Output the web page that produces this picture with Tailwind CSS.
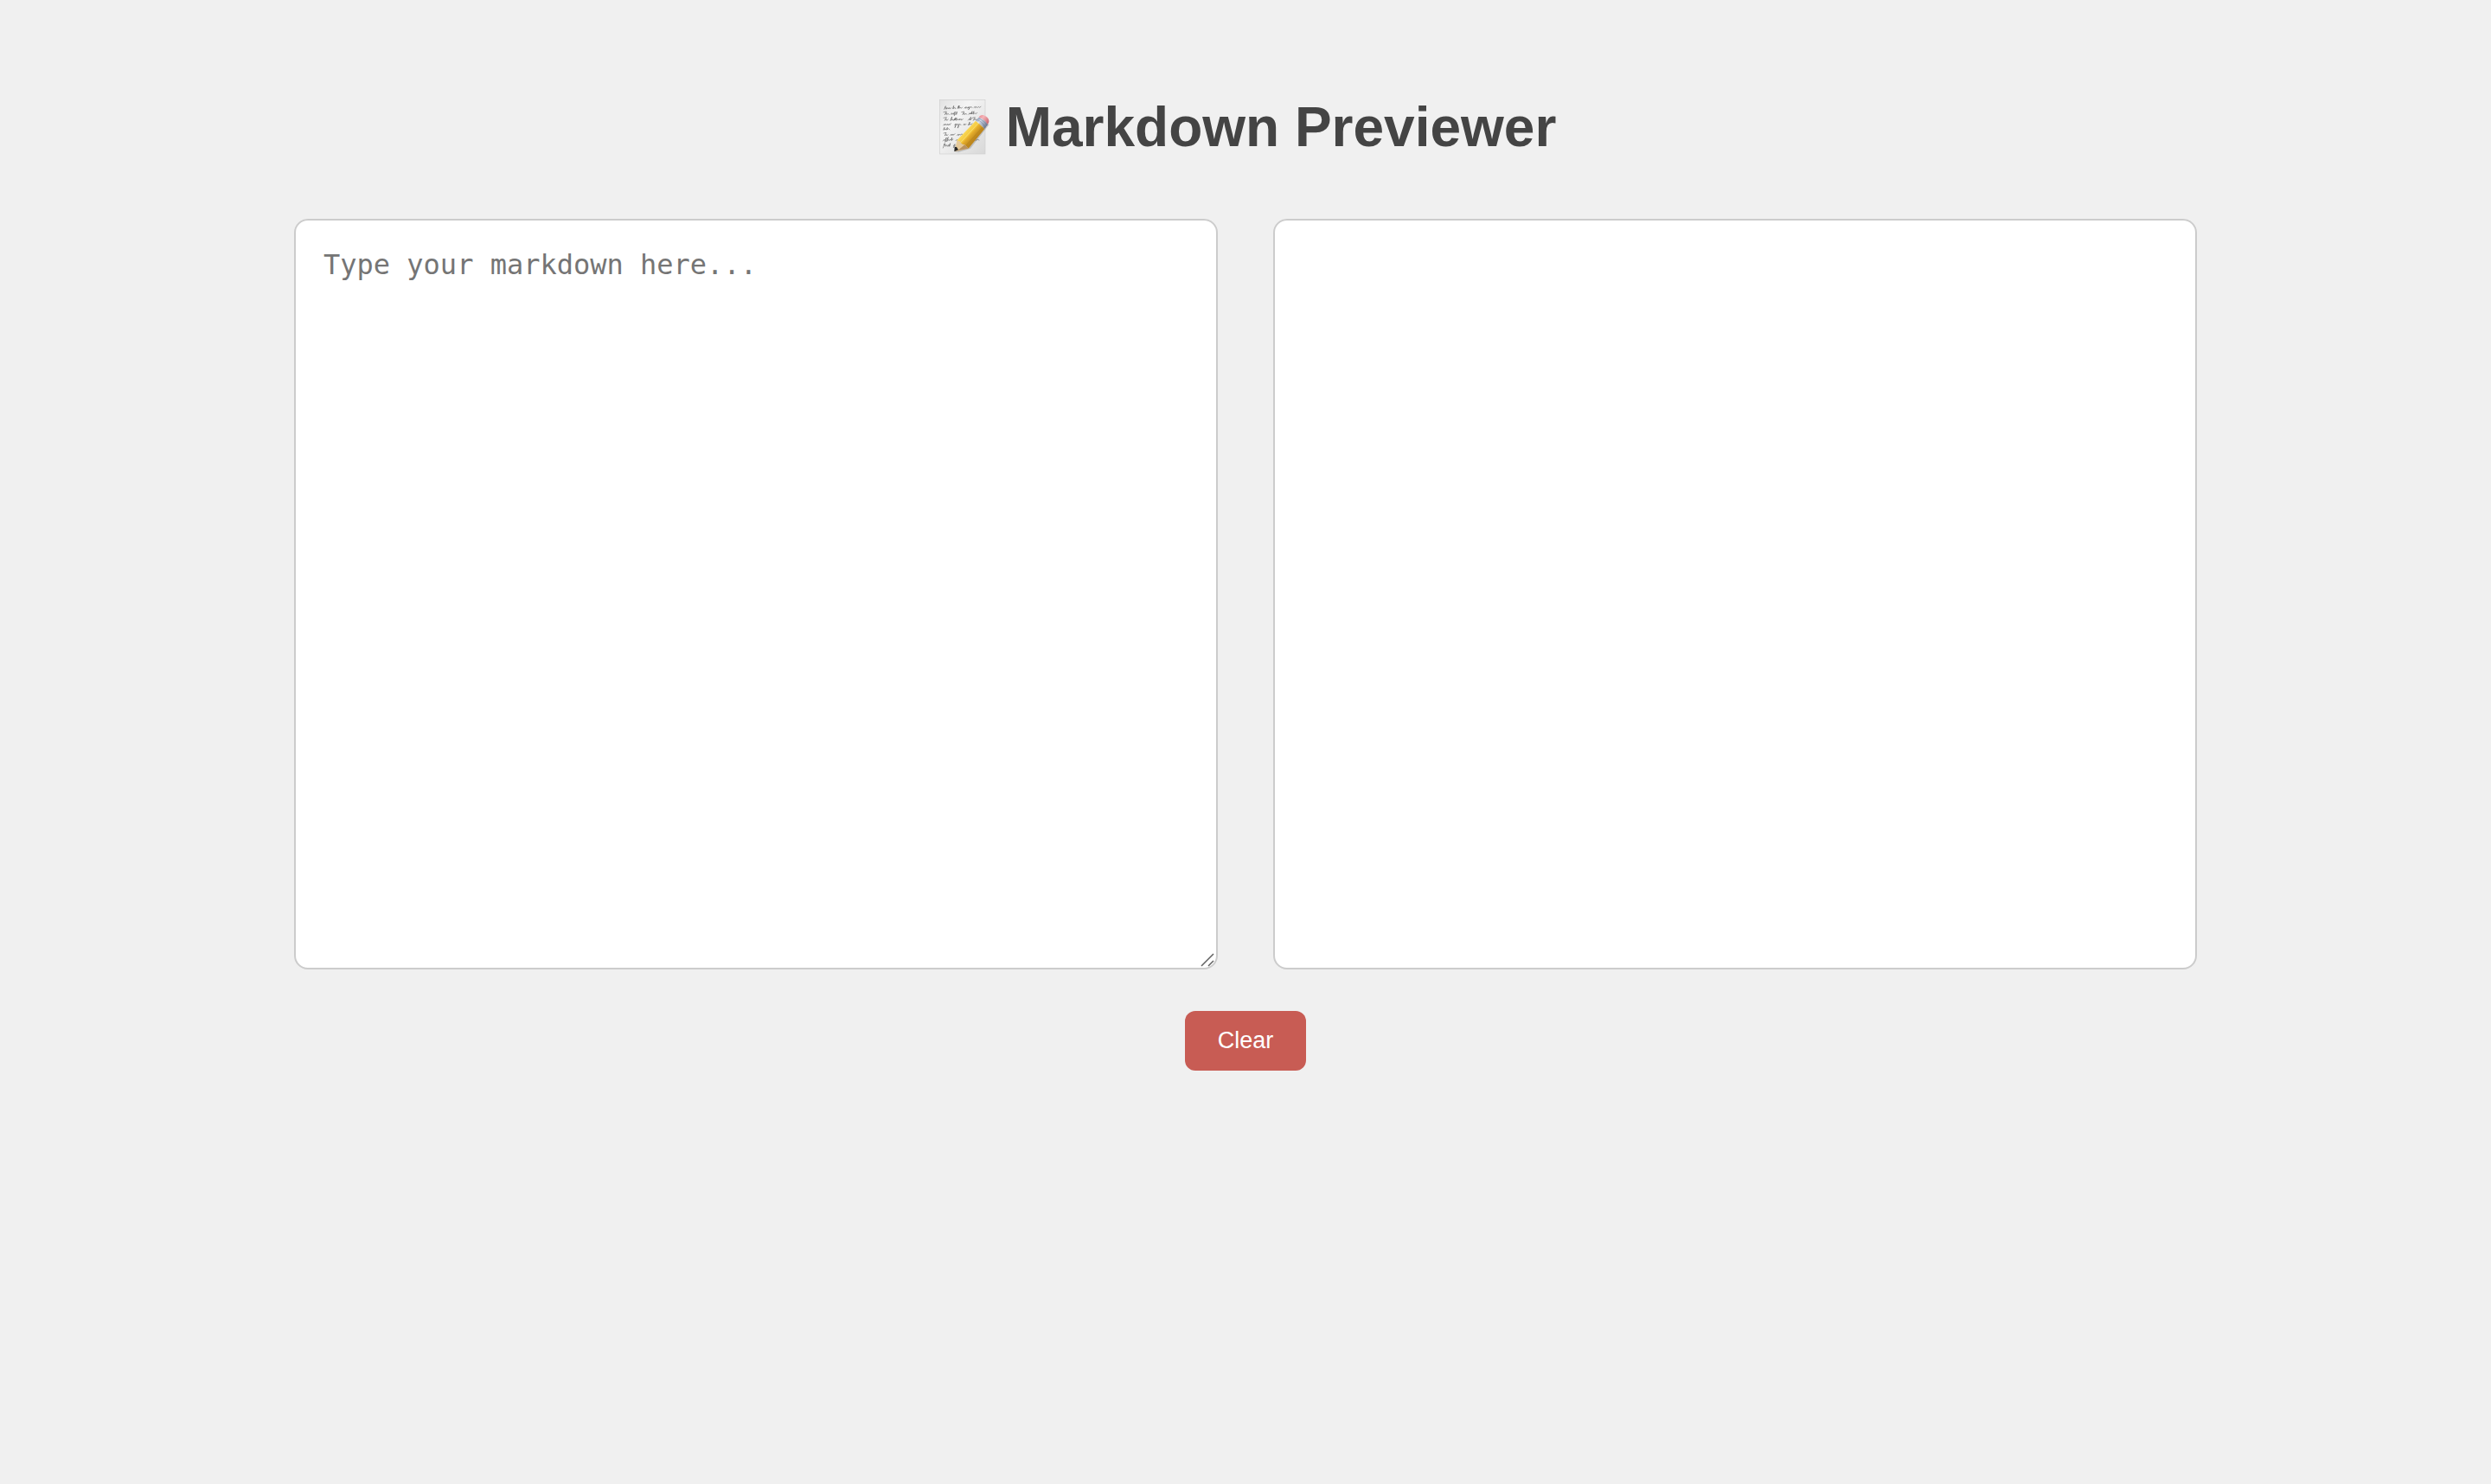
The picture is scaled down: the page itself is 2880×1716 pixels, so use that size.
<!DOCTYPE html>
<html lang="en">
<head>
<meta charset="utf-8">
<meta name="viewport" content="width=device-width, initial-scale=1">
<title>Markdown Previewer</title>
<script src="https://cdn.jsdelivr.net/npm/@tailwindcss/browser@4"></script>
</head>
<body class="min-h-screen bg-[#f0f0f0] font-['Liberation_Sans',Arial,sans-serif] text-[#444]">
<main class="mx-auto flex w-full max-w-[2264px] flex-col items-center px-8 pt-[110px] pb-16">
  <h1 class="flex items-center gap-[18px] text-[64px] leading-[74px] font-bold">
    <svg class="h-[66px] w-16 shrink-0" viewBox="33 38 192 198" aria-hidden="true">
      <defs>
        <linearGradient id="paper" x1="0" y1="0" x2="1" y2="1">
          <stop offset="0" stop-color="#e2e2e2"/><stop offset=".35" stop-color="#f4f4f4"/><stop offset="1" stop-color="#d8d8d8"/>
        </linearGradient>
        <linearGradient id="wood" gradientUnits="userSpaceOnUse" x1="140" y1="145" x2="172" y2="174">
          <stop offset="0" stop-color="#fbdc5c"/><stop offset=".45" stop-color="#f3c63c"/><stop offset=".55" stop-color="#e6ae2c"/><stop offset="1" stop-color="#bd861c"/>
        </linearGradient>
        <linearGradient id="metal" gradientUnits="userSpaceOnUse" x1="175" y1="108" x2="208" y2="136">
          <stop offset="0" stop-color="#8b9cb8"/><stop offset=".35" stop-color="#d3dcea"/><stop offset="1" stop-color="#737f95"/>
        </linearGradient>
        <linearGradient id="rubber" gradientUnits="userSpaceOnUse" x1="185" y1="98" x2="220" y2="124">
          <stop offset="0" stop-color="#e88b93"/><stop offset=".35" stop-color="#f6b4b8"/><stop offset="1" stop-color="#c8606c"/>
        </linearGradient>
      </defs>
      <rect x="49" y="42" width="158" height="188" fill="url(#paper)" stroke="#cecece" stroke-width="2"/>
      <g fill="none" stroke="#484848" stroke-width="1.5" stroke-linecap="round" stroke-linejoin="round">
        <path d="M65 75l5-11-2 8 6-2-2 5 4-5 3 4 3-5 2 5 5-4M94 73l4-10-1 10 5-4 2 4M111 72l4-9-1 9 3-10 0 10 4-4 3 4 4-4M135 71l4-4 0 5 4-5 2 5 4-5-1 4 5-5-2 9-3 1 6-6 5-4 3 4M168 69l4-3 1 4 4-4 3 4 4-4 3 3 5-3"/>
        <path d="M63 85l10-2-6 11 6-6 1 6 4-4 4 3M88 93l3-5 2 5 4-5 1 5 5-10-3 14 4-6 2 2 3-10-1 9M125 85l9-2-5 11 5-6 2 6 4-5 3 4M150 93l3-5 2 4 4-5-1 5 4-10-1 10 4-4 3-6-2 10 5-4 4 3 4-4"/>
        <path d="M63 105l10-2-6 11 5-5 2 5 5-4M86 114l6-13-3 13 4-5 3 5 5-6-2 6 6-10-2 9 5-8-1 9 4-5 3 4 4-5 1 5 4-5 2 5 5-4M148 113l4-5 2 5 3-11-1 10 4-4M162 105l10-2-6 11 6-6 3 5 4-4"/>
        <path d="M62 131l4-5 1 5 4-5 2 4 4-4 1 5 4-5 2 4 4-6M101 129l4-4-3 14 4-9 3-5 2 5 4-4-1 12-3 2 5-10 4-4 3 4M132 130l3-5 2 5 4-4M148 130l6-11-3 11 4-5 3 4 4-5"/>
        <path d="M62 146l4-8-1 9 4-4 3 4 4-9-1 8 5-4 4 4"/>
        <path d="M63 158l9-2-5 11 5-5 2 5 4-4M86 166l4-5 2 5 4-5 1 4 5-5M110 166l4-5 1 5 4-5 3 4 4-5 3 4"/>
        <path d="M61 185l4-5 2 4 6-11-5 16 7-9 4-8-5 15 6-7 2 4 4-5 3 4 3-10-2 10 6-4M105 184l4-4 3 4"/>
        <path d="M61 209l6-16-3 7 6-2-1 6 5-5 2 5 5-6 0 6 5-11-2 10M97 202l5-6-5 12 7-9M174 183l7-3 5 2"/>
      </g>
      <path d="M103 223l15-34 76-73 27 12-65 83-42 14z" fill="#000" opacity=".16"/>
      <path d="M109 183L174 115L205 143L149 211z" fill="url(#wood)"/>
      <path d="M119 193L184 122" stroke="#fde98a" stroke-width="3" opacity=".6"/>
      <path d="M137 205L198 137" stroke="#a97618" stroke-width="2" opacity=".6"/>
      <path d="M109 182l12 5 3 10 12 1 13 13-47 11z" fill="#e5c99a"/>
      <path d="M136 198l13 13-38 8z" fill="#b99260"/>
      <path d="M101 205l7 1 6 10-14 6z" fill="#262626"/>
      <path d="M174 115l13-13c12 3 24 13 30 25l-13 17c-5-12-17-24-30-29z" fill="url(#metal)"/>
      <path d="M179 111c13 5 24 16 29 28M183 106c13 5 25 14 30 26" fill="none" stroke="#66728a" stroke-width="2" opacity=".65"/>
      <path d="M185 103c4-8 13-10 22-5 10 5 16 16 12 24l-4 5c-6-11-17-21-30-24z" fill="url(#rubber)"/>
    </svg>
    <span>Markdown Previewer</span>
  </h1>

  <div class="mt-[69px] grid w-full grid-cols-2 gap-16">
    <div class="relative h-[868px]">
      <textarea aria-label="Markdown" placeholder="Type your markdown here..." class="block h-full w-full resize-none rounded-2xl border-2 border-[#ccc] bg-white p-8 font-['DejaVu_Sans_Mono',monospace] text-[32px] leading-[38px] text-[#444] outline-none placeholder:text-[#757575]"></textarea>
      <svg class="pointer-events-none absolute right-1 bottom-[3px] h-4 w-4" viewBox="0 0 16 16" fill="none" stroke="#606060" stroke-width="1.5" aria-hidden="true">
        <path d="M1 15L15 1M9 15L15 9"/>
      </svg>
    </div>
    <section aria-label="Preview" class="h-[868px] overflow-auto rounded-2xl border-2 border-[#ccc] bg-white p-8 text-[32px]"></section>
  </div>

  <button type="button" class="mt-12 cursor-pointer rounded-xl bg-[#c85c54] px-[38px] py-[18px] text-[27px] leading-[33px] text-white">Clear</button>
</main>
</body>
</html>
